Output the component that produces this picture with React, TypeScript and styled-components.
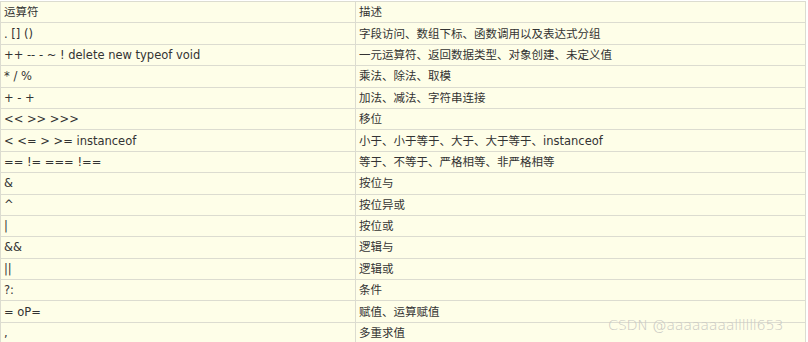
import React from "react";
import styled, { createGlobalStyle } from "styled-components";

const GlobalStyle = createGlobalStyle`
  html, body {
    margin: 0;
    padding: 0;
    background: #ffffff;
  }
`;

const Page = styled.div`
  position: relative;
  width: 808px;
  height: 342px;
  overflow: hidden;
  padding-top: 1px;
  box-sizing: border-box;
`;

const Table = styled.table`
  width: 806px;
  border-collapse: collapse;
  table-layout: fixed;
  background-color: #fefee8;
  font-family: "DejaVu Sans", Verdana, "Noto Sans CJK SC", sans-serif;
  font-size: 11.5px;
  color: #333333;
`;

const Cell = styled.td<{ $wide?: boolean }>`
  width: ${(p) => (p.$wide ? "auto" : "349px")};
  height: 20.4px;
  padding: 0 2px 0 3px;
  border: 1px solid #dcdcd0;
  line-height: 20px;
  white-space: nowrap;
  overflow: hidden;
  vertical-align: middle;
`;

const Watermark = styled.div`
  position: absolute;
  left: 608px;
  top: 317px;
  font-family: "DejaVu Sans", "Noto Sans", sans-serif;
  font-size: 14.4px;
  font-weight: 300;
  letter-spacing: -0.3px;
  color: #c8c8c2;
  pointer-events: none;
`;

const rows: [string, string][] = [
  ["运算符", "描述"],
  [". [] ()", "字段访问、数组下标、函数调用以及表达式分组"],
  ["++ -- - ~ ! delete new typeof void", "一元运算符、返回数据类型、对象创建、未定义值"],
  ["* / %", "乘法、除法、取模"],
  ["+ - +", "加法、减法、字符串连接"],
  ["<< >> >>>", "移位"],
  ["< <= > >= instanceof", "小于、小于等于、大于、大于等于、instanceof"],
  ["== != === !==", "等于、不等于、严格相等、非严格相等"],
  ["&", "按位与"],
  ["^", "按位异或"],
  ["|", "按位或"],
  ["&&", "逻辑与"],
  ["||", "逻辑或"],
  ["?:", "条件"],
  ["= oP=", "赋值、运算赋值"],
  [",", "多重求值"],
];

export default function App() {
  return (
    <Page>
      <GlobalStyle />
      <Table>
        <tbody>
          {rows.map(([op, desc], i) => (
            <tr key={i}>
              <Cell>{op}</Cell>
              <Cell $wide>{desc}</Cell>
            </tr>
          ))}
        </tbody>
      </Table>
      <Watermark>CSDN @aaaaaaaallllll653</Watermark>
    </Page>
  );
}
